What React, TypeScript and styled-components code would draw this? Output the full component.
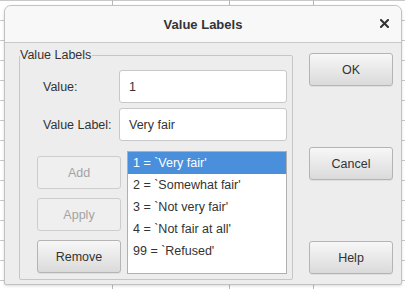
import styled, { createGlobalStyle } from "styled-components";

const GlobalStyle = createGlobalStyle`
  html, body {
    margin: 0;
    padding: 0;
    background: #ffffff;
    font-family: "Liberation Sans", Arial, sans-serif;
    font-size: 12.5px;
    color: #333333;
  }
`;

const Sheet = styled.div`
  position: relative;
  width: 405px;
  height: 289px;
  overflow: hidden;
  background-color: #ffffff;
  background-image: linear-gradient(to bottom, #c9c9c9 1px, transparent 1px);
  background-size: 100% 20px;
`;

const Column = styled.div<{ left: number }>`
  position: absolute;
  top: 0;
  bottom: 0;
  left: ${(p) => p.left}px;
  width: 1px;
  background: #b8b8b8;
`;

const Dialog = styled.div`
  position: absolute;
  left: 4px;
  top: 5px;
  width: 398px;
  height: 280px;
  display: flex;
  flex-direction: column;
  background: #ededed;
  border: 1px solid #c2c2c2;
  border-radius: 7px 7px 2px 2px;
  box-sizing: border-box;
  box-shadow: 0 1px 3px rgba(0, 0, 0, 0.15);
  overflow: hidden;
`;

const TitleBar = styled.div`
  position: relative;
  height: 36px;
  flex: none;
  display: flex;
  align-items: center;
  justify-content: center;
  background: #f8f8f8;
  border-bottom: 1px solid #c8c8c8;
`;

const Title = styled.div`
  font-weight: bold;
  font-size: 13px;
  color: #333333;
`;

const Close = styled.svg`
  position: absolute;
  right: 12px;
  top: 13px;
`;

const Body = styled.div`
  flex: 1;
  display: flex;
  padding: 5px 9px 5px 14px;
`;

const Group = styled.fieldset`
  margin: 0;
  width: 273px;
  box-sizing: border-box;
  border: 1px solid #c6c6c6;
  border-radius: 2px;
  padding: 8px 5px 5px 17px;
  display: flex;
  flex-direction: column;
`;

const Legend = styled.legend`
  padding: 0 1px 0 0;
  margin-left: -17px;
  line-height: 14px;
  font-size: 12.5px;
  color: #333333;
`;

const FieldRow = styled.div`
  display: flex;
  align-items: center;
  margin-bottom: 5px;
`;

const Label = styled.label`
  width: 82px;
  padding-left: 6px;
  box-sizing: border-box;
`;

const Input = styled.div`
  width: 168px;
  height: 33px;
  box-sizing: border-box;
  border: 1px solid #c8c8c8;
  border-radius: 3px;
  background: #ffffff;
  display: flex;
  align-items: center;
  padding-left: 9px;
`;

const Lower = styled.div`
  display: flex;
  gap: 6px;
  margin-top: 5px;
`;

const ButtonStack = styled.div`
  display: flex;
  flex-direction: column;
  gap: 9px;
  padding-top: 5px;
`;

const Button = styled.div<{ disabled?: boolean }>`
  width: 84px;
  height: 33px;
  box-sizing: border-box;
  display: flex;
  align-items: center;
  justify-content: center;
  border-radius: 3px;
  border: 1px solid ${(p) => (p.disabled ? "#cdcdcd" : "#b4b4b4")};
  background: ${(p) =>
    p.disabled
      ? "#efefef"
      : "linear-gradient(to bottom, #f7f7f7 0%, #e6e6e6 60%, #dadada 100%)"};
  color: ${(p) => (p.disabled ? "#a3a3a3" : "#333333")};
  box-shadow: ${(p) => (p.disabled ? "none" : "0 1px 0 rgba(0,0,0,0.06)")};
`;

const List = styled.div`
  width: 160px;
  height: 123px;
  box-sizing: border-box;
  border: 1px solid #b0b0b0;
  background: #ffffff;
`;

const Item = styled.div<{ selected?: boolean }>`
  height: 22px;
  line-height: 22px;
  padding-left: 5px;
  white-space: nowrap;
  background: ${(p) => (p.selected ? "#4a8fdb" : "transparent")};
  color: ${(p) => (p.selected ? "#ffffff" : "#333333")};
`;

const Side = styled.div`
  margin-left: 16px;
  display: flex;
  flex-direction: column;
  justify-content: space-between;
  padding: 5px 0 6px;
`;

const items = [
  "1 = `Very fair'",
  "2 = `Somewhat fair'",
  "3 = `Not very fair'",
  "4 = `Not fair at all'",
  "99 = `Refused'",
];

export default function App() {
  return (
    <>
      <GlobalStyle />
      <Sheet>
        <Column left={112} />
        <Column left={229} />
        <Column left={313} />
        <Dialog>
          <TitleBar>
            <Title>Value Labels</Title>
            <Close width="9" height="9" viewBox="0 0 9 9">
              <path
                d="M1 1L8 8M8 1L1 8"
                stroke="#333"
                strokeWidth="2"
                strokeLinecap="square"
              />
            </Close>
          </TitleBar>
          <Body>
            <Group>
              <Legend>Value Labels</Legend>
              <FieldRow>
                <Label>Value:</Label>
                <Input>1</Input>
              </FieldRow>
              <FieldRow>
                <Label>Value Label:</Label>
                <Input>Very fair</Input>
              </FieldRow>
              <Lower>
                <ButtonStack>
                  <Button disabled>Add</Button>
                  <Button disabled>Apply</Button>
                  <Button>Remove</Button>
                </ButtonStack>
                <List>
                  {items.map((t, i) => (
                    <Item key={t} selected={i === 0}>
                      {t}
                    </Item>
                  ))}
                </List>
              </Lower>
            </Group>
            <Side>
              <Button>OK</Button>
              <Button>Cancel</Button>
              <Button>Help</Button>
            </Side>
          </Body>
        </Dialog>
      </Sheet>
    </>
  );
}
